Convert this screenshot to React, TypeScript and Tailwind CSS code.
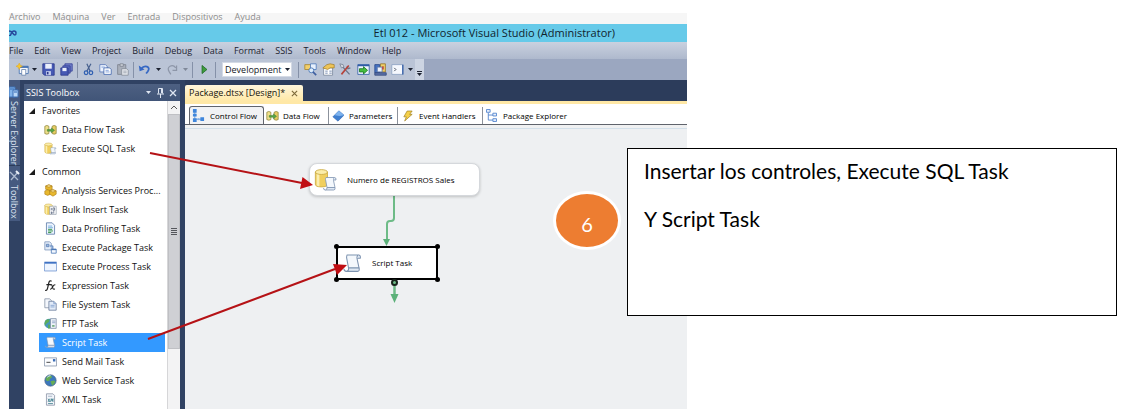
import React from "react";

type IconName =
  | "dataflow" | "sql" | "cubes" | "bulk" | "profile" | "package" | "process"
  | "fx" | "files" | "ftp" | "script" | "mail" | "web" | "xml";

const favorites: { icon: IconName; label: string }[] = [
  { icon: "dataflow", label: "Data Flow Task" },
  { icon: "sql", label: "Execute SQL Task" },
];

const common: { icon: IconName; label: string; selected?: boolean }[] = [
  { icon: "cubes", label: "Analysis Services Proc..." },
  { icon: "bulk", label: "Bulk Insert Task" },
  { icon: "profile", label: "Data Profiling Task" },
  { icon: "package", label: "Execute Package Task" },
  { icon: "process", label: "Execute Process Task" },
  { icon: "fx", label: "Expression Task" },
  { icon: "files", label: "File System Task" },
  { icon: "ftp", label: "FTP Task" },
  { icon: "script", label: "Script Task", selected: true },
  { icon: "mail", label: "Send Mail Task" },
  { icon: "web", label: "Web Service Task" },
  { icon: "xml", label: "XML Task" },
];

const vmMenu = ["Archivo", "Máquina", "Ver", "Entrada", "Dispositivos", "Ayuda"];
const menu = ["File", "Edit", "View", "Project", "Build", "Debug", "Data", "Format", "SSIS", "Tools", "Window", "Help"];

function Scroll() {
  return (
    <g strokeLinejoin="round">
      <path d="M4 1.5h8.500q-1.500 1-1 3l1.500 7h-8l-1.500-8q0-1.500.5-2z" fill="#f4f8fc" stroke="#7d93b0" strokeWidth=".8" />
      <path d="M12.500 1.500q1.800 0 1.500 2.500h-2.500M1.500 12q0 2 1.800 2h8.500q1.800-.2 1.200-2.500h-8q.3 2-1.500 2.500" fill="#dfe8f3" stroke="#7d93b0" strokeWidth=".8" />
    </g>
  );
}

function Cylinder() {
  return (
    <g>
      <path d="M1 3v9q0 2 4.500 2t4.500-2V3z" fill="#f0cf5e" stroke="#c9a840" strokeWidth=".6" />
      <path d="M2 4v9l2 .7V4z" fill="#fbeeb0" />
      <ellipse cx="5.500" cy="3" rx="4.500" ry="1.800" fill="#fbedaa" stroke="#c9a840" strokeWidth=".6" />
    </g>
  );
}

function TaskIcon({ name }: { name: IconName }) {
  return (
    <svg viewBox="0 0 16 16" className="h-[13px] w-[13px] shrink-0" fill="none" aria-hidden="true">
      {name === "dataflow" && (
        <g stroke="#8b8138" strokeWidth=".9">
          <path d="M1 4q2.500-2 5 0v9q-2.500 1.500-5 0z" fill="#efe08a" />
          <path d="M10 4q2.500-2 5 0v9q-2.500 1.500-5 0z" fill="#e6cc62" />
          <path d="M4 8h5V6l4 3-4 3v-2H4z" fill="#58a744" stroke="#3c7b32" strokeWidth=".6" />
        </g>
      )}
      {name === "sql" && (
        <>
          <Cylinder />
          <g transform="translate(6 6) scale(.62)"><Scroll /></g>
        </>
      )}
      {name === "cubes" && (
        <g fill="#e8b82e" stroke="#a87912" strokeWidth=".7">
          <path d="M6 1l4 1.500v4L6 8 2 6.500v-4z" />
          <path d="M4.500 7l3.500 1.500v4L4.500 14 1 12.500v-4z" />
          <path d="M11 7l4 1.500v4L11 15l-4-2.500v-4z" />
          <path d="M2 2.500L6 4l4-1.500L6 1zM7 8.500l4 1.500 4-1.500L11 7z" fill="#f9e291" />
        </g>
      )}
      {name === "bulk" && (
        <>
          <Cylinder />
          <path d="M7 4h8v10H7z" fill="#fff" stroke="#8a94a5" strokeWidth=".8" />
          <path d="M9 6v3m2-3h2v3h-2zM9 11h1v2H9zm3-1v3" stroke="#4f5d77" strokeWidth=".9" />
        </>
      )}
      {name === "profile" && (
        <>
          <path d="M3 1h7l3 3v11H3z" fill="#eef5ff" stroke="#5d7ba8" />
          <path d="M5 5h5M5 7h6" stroke="#68a4d8" />
          <path d="M5 9h5M5 11h6M5 13h4" stroke="#35934a" strokeWidth="1.200" />
        </>
      )}
      {name === "package" && (
        <>
          <path d="M1 1h6l2 2v8H1z" fill="#e4edf9" stroke="#7f97bb" />
          <path d="M3 4h3v3H3zM7 6h4v4" fill="#9ebce3" stroke="#5c80b5" />
          <path d="M9 10h6v5H9z" fill="#f5f9ff" stroke="#4c79b6" />
          <path d="M9 10.500h6" stroke="#4c79b6" strokeWidth="1.500" />
        </>
      )}
      {name === "process" && (
        <>
          <path d="M.5 2.500h15v11H.5z" fill="#eef5ff" stroke="#6f94cf" />
          <path d="M1 3.500h14" stroke="#3b6fc3" strokeWidth="2" />
        </>
      )}
      {name === "fx" && (
        <g stroke="#222" strokeLinecap="round">
          <path d="M2 14q1.800.5 2.500-3L6 4.500q.7-3 2.800-2M3.500 7H8" strokeWidth="1.500" />
          <path d="M8 7q1.500-.5 2 1.500l1 3q.5 1.500 2 .8M13.500 7q-1.500 0-2.800 2.500T8 12.500" strokeWidth="1.300" />
        </g>
      )}
      {name === "files" && (
        <>
          <path d="M1 1h6l2 2v9H1z" fill="#f4f7fc" stroke="#8995a8" />
          <path d="M6 4h6l3 3v8H6z" fill="#e2ebf8" stroke="#6b7e9d" />
          <path d="M12 4v3h3M8 9h5M8 11h5" stroke="#7d9ccc" />
        </>
      )}
      {name === "ftp" && (
        <>
          <circle cx="6.500" cy="8" r="6" fill="#4796bd" />
          <path d="M2 4q3-2 5-1l-1 3-3 2-2 3Q0 7 2 4zM5 9l3 1-1 4H5z" fill="#5cac5a" />
          <path d="M8 2h7v12H8z" fill="#eef2f8" stroke="#8391a8" />
          <path d="M10 5h4M10 7h4" stroke="#8aa0c4" />
          <path d="M10 11h3" stroke="#3c8f46" strokeWidth="1.500" />
        </>
      )}
      {name === "script" && <Scroll />}
      {name === "mail" && (
        <>
          <path d="M.5 3.500h15v10H.5z" fill="#fcfdff" stroke="#8592a8" />
          <path d="M3 9h5" stroke="#444" strokeWidth="1.200" />
          <path d="M11 5h3v3h-3z" fill="#3e6eb6" />
        </>
      )}
      {name === "web" && (
        <>
          <circle cx="8" cy="8" r="7" fill="#3c78bd" stroke="#506680" strokeWidth=".8" />
          <path d="M3 4q3-3 6-2l1 2-3 2v2L4 9 2 7zM8 9l4-1 2 1q-1 4-4 5l-1-2z" fill="#65ac55" />
          <path d="M4 4q2-2 4-2" stroke="#d8edfa" strokeWidth="1.200" />
        </>
      )}
      {name === "xml" && (
        <>
          <path d="M3 1h8l2 2v12H3z" fill="#f2f5fa" stroke="#8b95a6" />
          <path d="M5 4h5" stroke="#9aa9bf" />
          <path d="M5 7l2 4M7 7l-2 4m3 0l1-4 1 3 1-3v4M5 13h6" stroke="#3f7f8c" />
        </>
      )}
    </svg>
  );
}

function Caret({ dim = false }: { dim?: boolean }) {
  return (
    <svg viewBox="0 0 5 3" className="h-[3px] w-[5px]" aria-hidden="true">
      <path d="M0 0h5L2.500 3z" fill={dim ? "#7f8899" : "#1c2230"} />
    </svg>
  );
}

function ToolButton({ label, width, children }: { label: string; width: string; children: React.ReactNode }) {
  return (
    <button type="button" aria-label={label} className={`flex h-[21px] shrink-0 items-center justify-center ${width}`}>
      {children}
    </button>
  );
}

function Glyph({ children }: { children: React.ReactNode }) {
  return (
    <svg viewBox="0 0 16 16" className="h-[13px] w-[13px]" fill="none" aria-hidden="true">
      {children}
    </svg>
  );
}

function Separator() {
  return <span className="mx-[2px] h-[16px] w-px shrink-0 bg-[#8591a8]" />;
}

function Toolbar() {
  return (
    <div className="flex h-[21px] bg-[#9ba7c0]">
      <div className="flex items-center bg-[#bac4d6] pl-[6px]">
        <ToolButton label="New project" width="w-[14px]">
          <Glyph>
            <path d="M4 4h11v9H4z" fill="#f5f8fd" stroke="#3e6cae" />
            <path d="M4 5h11" stroke="#3e6cae" strokeWidth="2" />
            <path d="M7 8h5v7H7z" fill="#fff" stroke="#6984ad" />
            <path d="M4 0l1.300 2.700L8 4 5.300 5.300 4 8 2.700 5.300 0 4l2.700-1.300z" fill="#f6c62f" stroke="#e0a21c" strokeWidth=".5" />
          </Glyph>
        </ToolButton>
        <ToolButton label="New project options" width="w-[11px]"><Caret /></ToolButton>
        <ToolButton label="Save" width="w-[17px]">
          <Glyph>
            <path d="M1 1h14v14H3l-2-2z" fill="#4659b4" stroke="#2b378a" />
            <path d="M4 1h8v6H4z" fill="#e9eefb" />
            <path d="M5 10h6v5H5z" fill="#c4cdec" />
            <path d="M6 11h2v3H6z" fill="#2b378a" />
          </Glyph>
        </ToolButton>
        <ToolButton label="Save all" width="w-[18px]">
          <Glyph>
            <path d="M6 1h9v9h-9z" fill="#7583cb" stroke="#323e95" />
            <path d="M3.500 3.500h9v9h-9z" fill="#5b6bc0" stroke="#323e95" />
            <path d="M1 6h9v9H1z" fill="#4659b4" stroke="#2b378a" />
            <path d="M3 6h5v4H3z" fill="#e9eefb" />
          </Glyph>
        </ToolButton>
        <Separator />
        <ToolButton label="Cut" width="w-[17px]">
          <Glyph>
            <path d="M6 1l4 9M11 1L6 10" stroke="#47618f" strokeWidth="1.500" />
            <circle cx="5" cy="12" r="2.200" stroke="#2e5eb1" strokeWidth="1.500" />
            <circle cx="11" cy="12" r="2.200" stroke="#2e5eb1" strokeWidth="1.500" />
          </Glyph>
        </ToolButton>
        <ToolButton label="Copy" width="w-[17px]">
          <Glyph>
            <path d="M1 2h7l2 2v7H1z" fill="#edf3fd" stroke="#5878b8" />
            <path d="M6 6h7l2 2v6H6z" fill="#fff" stroke="#3d62ad" />
            <path d="M8 9h4M8 11h5M3 5h4" stroke="#6f93d4" />
          </Glyph>
        </ToolButton>
        <ToolButton label="Paste" width="w-[17px]">
          <Glyph>
            <path d="M2 2h10v12H2z" fill="#a9afba" stroke="#7c838f" />
            <path d="M5 1h4v3H5z" fill="#d3d7de" stroke="#7c838f" />
            <path d="M7 7h6l2 2v6H7z" fill="#e4e7ec" stroke="#858c98" />
            <path d="M9 10h4M9 12h4" stroke="#9aa0ab" />
          </Glyph>
        </ToolButton>
        <Separator />
        <ToolButton label="Undo" width="w-[17px]">
          <Glyph>
            <path d="M4 7q3-4 7-2.500t1 6l-2 2.500" stroke="#3668c4" strokeWidth="2.200" />
            <path d="M1 3l1 7 6-2z" fill="#3668c4" />
          </Glyph>
        </ToolButton>
        <ToolButton label="Undo options" width="w-[10px]"><Caret /></ToolButton>
        <ToolButton label="Redo" width="w-[18px]">
          <Glyph>
            <path d="M12 6Q9 2 5 4t-1 7l2 3" stroke="#8d96a8" strokeWidth="1.500" />
            <path d="M13 3v6H8" stroke="#8d96a8" strokeWidth="1.500" />
          </Glyph>
        </ToolButton>
        <ToolButton label="Redo options" width="w-[9px]"><Caret dim /></ToolButton>
        <Separator />
        <ToolButton label="Start debugging" width="w-[18px]">
          <Glyph><path d="M5 3l6 5-6 5z" fill="#3f9c3c" stroke="#1e6b26" /></Glyph>
        </ToolButton>
        <Separator />
        <span className="relative mx-[4px] flex items-center">
          <select
            aria-label="Solution configuration"
            className="h-[15px] w-[70px] appearance-none border border-[#d4dae5] bg-white pl-[2px] text-[9px] leading-[12px] text-[#15181f]"
          >
            <option>Development</option>
          </select>
          <span className="pointer-events-none absolute right-[2px]"><Caret /></span>
        </span>
        <Separator />
        <ToolButton label="Find in files" width="w-[18px]">
          <Glyph>
            <path d="M1 2h9v6H1z" fill="#f2cf6a" stroke="#a98530" />
            <path d="M8 1h7v7H8z" fill="#e7f0fd" stroke="#4e79bb" />
            <circle cx="9" cy="9" r="3" fill="#dcebfa" stroke="#4272b4" />
            <path d="M11 11l4 4" stroke="#3f5fa0" strokeWidth="2" />
          </Glyph>
        </ToolButton>
        <ToolButton label="Properties" width="w-[18px]">
          <Glyph>
            <path d="M2 6h11v9H2z" fill="#fff" stroke="#7b879d" />
            <path d="M4 10h3M9 10h3M4 12.500h3M9 12.500h3" stroke="#5e76a4" />
            <path d="M1 6l5-4 4-1 5 1v4h-5l-3 2z" fill="#eec457" stroke="#9b7620" strokeWidth=".8" />
          </Glyph>
        </ToolButton>
        <ToolButton label="Toolbox" width="w-[17px]">
          <Glyph>
            <path d="M2 2l11 12M14 6l-3 1-1-3" stroke="#6a7487" strokeWidth="1.600" />
            <path d="M12 3L3 14" stroke="#b6433b" strokeWidth="2" />
            <path d="M1 1l4 1 1 3-3 1z" fill="#d5dae3" stroke="#6a7487" strokeWidth=".8" />
          </Glyph>
        </ToolButton>
        <ToolButton label="Start page" width="w-[18px]">
          <Glyph>
            <path d="M1 2h14v12H1z" fill="#f1f6ff" stroke="#2f5ba5" />
            <path d="M1 3h14" stroke="#2f5ba5" strokeWidth="2" />
            <path d="M3 7h5V4.500L13 9l-5 4.500V11H3z" fill="#45bd3d" stroke="#167524" />
          </Glyph>
        </ToolButton>
        <ToolButton label="Extension manager" width="w-[17px]">
          <Glyph>
            <path d="M1 2h6v10H1z" fill="#4774c4" stroke="#274887" />
            <path d="M8 1h6v10H8z" fill="#efd067" stroke="#94742a" />
            <path d="M4 5h6v6H4z" fill="#eef3fb" stroke="#5671a3" />
            <path d="M1 12h14v3H1z" fill="#5b71a8" stroke="#31477b" />
            <path d="M10 4h2v4h-2z" fill="#bc4743" />
          </Glyph>
        </ToolButton>
        <ToolButton label="Command window" width="w-[17px]">
          <Glyph>
            <path d="M1 2h14v12H1z" fill="#f5f8fe" stroke="#8ba0c2" />
            <path d="M14.500 2v12" stroke="#2c58a3" strokeWidth="1.500" />
            <path d="M4 6l2 2-2 2" stroke="#222b3b" />
          </Glyph>
        </ToolButton>
        <ToolButton label="Command window options" width="w-[9px]"><Caret /></ToolButton>
        <button type="button" aria-label="Toolbar options" className="flex h-[21px] w-[9px] flex-col items-center justify-end gap-[1px] bg-[#ccd4e2] pb-[4px]">
          <span className="h-px w-[5px] bg-[#1c2230]" />
          <Caret />
        </button>
      </div>
    </div>
  );
}

function SideTabs() {
  return (
    <div className="w-[15px] shrink-0 text-[9px] leading-[11px] text-[#dbe3f0]">
      <button type="button" className="flex h-[86px] w-[11px] flex-col items-center gap-[3px] border-b border-[#2c3c5a] bg-[#465a80] pt-[6px]">
        <svg viewBox="0 0 11 12" className="h-[12px] w-[11px] shrink-0" aria-hidden="true">
          <path d="M0 1h6v10H0z" fill="#83b4ea" stroke="#3d70b6" />
          <path d="M4 4h5v7H4z" fill="#bcd9f8" stroke="#3d70b6" />
          <path d="M5 6h3M1 3h4" stroke="#2f66b2" />
        </svg>
        <span className="whitespace-nowrap [writing-mode:vertical-rl]">Server Explorer</span>
      </button>
      <button type="button" className="flex h-[55px] w-[11px] flex-col items-center gap-[3px] bg-[#465a80] pt-[4px]">
        <svg viewBox="0 0 11 12" className="h-[12px] w-[11px] shrink-0" fill="none" aria-hidden="true">
          <path d="M1 2l8 8M9 2L2 10" stroke="#aebbd0" strokeWidth="1.300" />
          <path d="M7 1l3 3" stroke="#e9eef6" strokeWidth="2" />
        </svg>
        <span className="whitespace-nowrap [writing-mode:vertical-rl]">Toolbox</span>
      </button>
    </div>
  );
}

function GroupHeader({ children }: { children: React.ReactNode }) {
  return (
    <h3 className="flex h-[19px] items-center gap-[7px] pl-[5px]">
      <svg viewBox="0 0 6 6" className="h-[6px] w-[6px]" aria-hidden="true"><path d="M6 0v6H0z" fill="#1b1b1b" /></svg>
      {children}
    </h3>
  );
}

function TaskRow({ icon, label, selected = false }: { icon: IconName; label: string; selected?: boolean }) {
  return (
    <li className={`ml-[15px] mr-[2px] flex h-[19px] items-center gap-[5px] pl-[5px] ${selected ? "bg-[#3399ff] text-white" : ""}`}>
      <TaskIcon name={icon} />
      <span className="whitespace-nowrap">{label}</span>
    </li>
  );
}

function ToolboxPanel() {
  return (
    <aside className="flex w-[156px] shrink-0 flex-col pt-[4px]">
      <header className="flex h-[17px] items-center bg-gradient-to-b from-[#4d6082] to-[#415578] pl-[2px] pr-px text-[9px] text-white">
        <h2 className="flex-1">SSIS Toolbox</h2>
        <button type="button" aria-label="Window position" className="flex w-[12px] justify-center">
          <svg viewBox="0 0 5 3" className="h-[3px] w-[5px]"><path d="M0 0h5L2.500 3z" fill="#dfe6f2" /></svg>
        </button>
        <button type="button" aria-label="Auto hide" className="flex w-[13px] justify-center">
          <svg viewBox="0 0 9 10" className="h-[10px] w-[9px]" fill="none" stroke="#dfe6f2">
            <path d="M2.500 5.500v-5h4v5M1 6h7M4.500 6v4M5.500 1v4" />
          </svg>
        </button>
        <button type="button" aria-label="Close toolbox" className="flex w-[12px] justify-center">
          <svg viewBox="0 0 8 8" className="h-[8px] w-[8px]" stroke="#dfe6f2" strokeWidth="1.300"><path d="M1 1l6 6M7 1L1 7" /></svg>
        </button>
      </header>
      <div className="flex flex-1 bg-white text-[9px] text-[#111]">
        <div className="min-w-0 flex-1">
          <GroupHeader>Favorites</GroupHeader>
          <ul>{favorites.map((t) => <TaskRow key={t.label} {...t} />)}</ul>
          <div className="mt-[4px]"><GroupHeader>Common</GroupHeader></div>
          <ul>{common.map((t) => <TaskRow key={t.label} {...t} />)}</ul>
        </div>
        <div className="flex w-[13px] flex-col border-l border-[#d6d6d8] bg-[#f3f3f4]">
          <svg viewBox="0 0 12 13" className="h-[13px] w-[12px]" fill="none" aria-hidden="true"><path d="M3 8l3-3 3 3" stroke="#585858" /></svg>
          <div className="flex h-[235px] flex-col items-center justify-center gap-px border border-[#bfc0c4] bg-[#cfd0d4]">
            <span className="h-px w-[6px] bg-[#55575c]" />
            <span className="h-px w-[6px] bg-[#55575c]" />
            <span className="h-px w-[6px] bg-[#55575c]" />
            <span className="h-px w-[6px] bg-[#55575c]" />
          </div>
        </div>
      </div>
    </aside>
  );
}

function DesignerTabs() {
  const tab = "flex items-center border-r border-[#8c929c] whitespace-nowrap";
  return (
    <nav className="flex h-[21px] items-end border-b border-[#60646c] bg-white pl-[4px] text-[8px] text-black">
      <button type="button" className="flex h-[18px] w-[75px] items-center gap-[5px] rounded-t-[3px] border border-b-0 border-[#60646c] bg-[#f1f2f4] pl-[2px] whitespace-nowrap">
        <svg viewBox="0 0 14 14" className="h-[13px] w-[13px]" aria-hidden="true">
          <path d="M3 3v8h8" fill="none" stroke="#6f9bd4" />
          <path d="M1 0h4v4H1zM1 5h4v3H1zM1 10h4v4H1zM9 9h4v4H9z" fill="#3f86dc" />
          <path d="M6 10h2v2H6z" fill="#7fb0ea" />
        </svg>
        Control Flow
      </button>
      <button type="button" className={`${tab} h-[17px] w-[65px] gap-[4px] pl-[2px]`}>
        <TaskIcon name="dataflow" />Data Flow
      </button>
      <button type="button" className={`${tab} h-[17px] w-[69px] gap-[5px] pl-[3px]`}>
        <svg viewBox="0 0 14 14" className="h-[12px] w-[12px]" aria-hidden="true">
          <path d="M8 1l6 5-7 7-6-5z" fill="#3f7fd0" stroke="#2b5ea8" strokeWidth=".6" />
          <path d="M8 1l6 5-5 1-6-1z" fill="#7eb3ee" />
        </svg>
        Parameters
      </button>
      <button type="button" className={`${tab} h-[17px] w-[85px] gap-[6px] pl-[5px]`}>
        <svg viewBox="0 0 12 14" className="h-[12px] w-[10px]" aria-hidden="true">
          <path d="M5 1h6L8 5h3L2 13l2-5H1z" fill="#f5d04a" stroke="#9c7b1c" strokeWidth=".8" />
        </svg>
        Event Handlers
      </button>
      <button type="button" className="flex h-[17px] items-center gap-[6px] pl-[3px] whitespace-nowrap">
        <svg viewBox="0 0 12 14" className="h-[13px] w-[11px]" fill="#eaf2fd" stroke="#5486cf" aria-hidden="true">
          <path d="M2.500 4v8H8M2.500 6.500H8" fill="none" />
          <path d="M.5.500h4v3h-4zM7.500 4.500h4v3h-4zM7.500 10.500h4v3h-4z" />
        </svg>
        Package Explorer
      </button>
    </nav>
  );
}

function FlowCanvas() {
  return (
    <div className="relative flex-1 border-t-[3px] border-[#f0f1f2] bg-[#eef0f2]">
      <div className="h-px bg-[#d3e0ea]" />
      <svg className="absolute left-0 top-0 h-[200px] w-[300px]" viewBox="0 0 300 200" fill="none" aria-hidden="true">
        <path d="M209 68v22q0 3-3 3h-1q-3 0-3 3v18" stroke="#6dbb87" strokeWidth="2" />
        <path d="M198 111h7l-3.500 7z" fill="#5cb079" />
        <path d="M209.500 155v14" stroke="#6dbb87" strokeWidth="2.500" />
        <path d="M205.500 166h8l-4 9z" fill="#5cb079" />
      </svg>
      <div className="absolute left-[124px] top-[35px] flex h-[33px] w-[171px] items-center gap-[9px] rounded-[8px] border border-[#d5d8dc] bg-white pl-[4px] text-[8px] text-black shadow-[0_1px_3px_rgba(0,0,0,0.2)]">
        <svg viewBox="0 0 24 24" className="h-[24px] w-[24px]" fill="none" aria-hidden="true">
          <g transform="translate(0 0) scale(1.350)"><Cylinder /></g>
          <g transform="translate(8 8)"><Scroll /></g>
        </svg>
        <span className="whitespace-nowrap">Numero de REGISTROS Sales</span>
      </div>
      <div className="absolute left-[151px] top-[118px] flex h-[34px] w-[102px] items-center gap-[9px] border-2 border-black bg-white pl-[4px] text-[8px] text-black">
        <svg viewBox="0 0 16 16" className="h-[21px] w-[21px]" fill="none" aria-hidden="true"><Scroll /></svg>
        <span className="whitespace-nowrap">Script Task</span>
        <span className="absolute -left-[4px] -top-[4px] h-[5px] w-[5px] rounded-full bg-black" />
        <span className="absolute -right-[4px] -top-[4px] h-[5px] w-[5px] rounded-full bg-black" />
        <span className="absolute -bottom-[4px] -left-[4px] h-[5px] w-[5px] rounded-full bg-black" />
        <span className="absolute -bottom-[4px] -right-[4px] h-[5px] w-[5px] rounded-full bg-black" />
      </div>
      <span className="absolute left-[206px] top-[151px] h-[7px] w-[7px] rounded-full border-2 border-[#18251c] bg-[#6dbb87]" />
    </div>
  );
}

function StudioWindow() {
  return (
    <section className="min-w-0 font-['Open_Sans','Noto_Sans',sans-serif]">
      <ul className="flex h-[11px] items-start gap-[12px] bg-[#f6f6f6] text-[9px] leading-[8px] text-[#8d8d8d]">
        {vmMenu.map((m) => <li key={m}>{m}</li>)}
      </ul>
      <header className="flex h-[18px] items-center justify-between bg-[#66cae9] pr-[72px] text-[11px] text-[#10242e]">
        <svg viewBox="0 0 8 6" className="h-[6px] w-[8px]" fill="none" aria-hidden="true">
          <path d="M0 1q2 0 3.500 2T6 5t1-2-2-2T2 4 0 5" stroke="#26489c" strokeWidth="1.500" />
        </svg>
        <h1 className="whitespace-nowrap">Etl 012 - Microsoft Visual Studio (Administrator)</h1>
      </header>
      <ul className="flex h-[17px] items-center gap-[11px] bg-gradient-to-b from-[#cad1df] to-[#aeb9cd] text-[9px] text-[#1c2230]">
        {menu.map((m) => <li key={m}>{m}</li>)}
      </ul>
      <Toolbar />
      <div className="flex bg-[#304263]">
        <SideTabs />
        <ToolboxPanel />
        <main className="ml-[5px] flex min-w-0 flex-1 flex-col bg-[#2c3c5b] pt-[5px]">
          <div className="flex h-[16px] w-[118px] items-center justify-between rounded-t-[2px] bg-gradient-to-b from-[#fff6dc] to-[#ffe8a6] pl-[4px] pr-[5px] text-[9px] text-[#15120a]">
            <span className="whitespace-nowrap">Package.dtsx [Design]*</span>
            <button type="button" aria-label="Close document">
              <svg viewBox="0 0 8 8" className="h-[7px] w-[7px]" stroke="#7d6a3a" strokeWidth="1.300"><path d="M1 1l6 6M7 1L1 7" /></svg>
            </button>
          </div>
          <div className="h-[3px] bg-[#ffe8a6]" />
          <DesignerTabs />
          <FlowCanvas />
        </main>
      </div>
    </section>
  );
}

export default function App() {
  return (
    <div className="relative grid grid-cols-[678fr_430fr] bg-white px-[9px] pt-[13px]">
      <StudioWindow />
      <svg className="pointer-events-none absolute left-0 top-0 h-[400px] w-[400px]" viewBox="0 0 400 400" aria-hidden="true">
        <path d="M150 153L302 183M148 339L335 269" stroke="#b51216" strokeWidth="2" />
        <path d="M313 185l-13 4 2.500-12zM347 265l-10 10-4-11z" fill="#c00d12" />
      </svg>
      <div className="absolute right-[9px] top-[148px] flex items-start font-['Lato','Liberation_Sans',sans-serif]">
        <span className="mr-[6px] mt-[43px] flex h-[59px] w-[68px] items-center justify-center rounded-[50%] border-[3px] border-white bg-[#ed7d31] pt-[6px] text-[20px] text-white">
          6
        </span>
        <div className="h-[168px] w-[490px] border border-black bg-white pl-[16px] pt-[7px] text-[21px] leading-[30px] text-black">
          <p>Insertar los controles, Execute SQL Task</p>
          <p className="mt-[18px]">Y Script Task</p>
        </div>
      </div>
    </div>
  );
}
